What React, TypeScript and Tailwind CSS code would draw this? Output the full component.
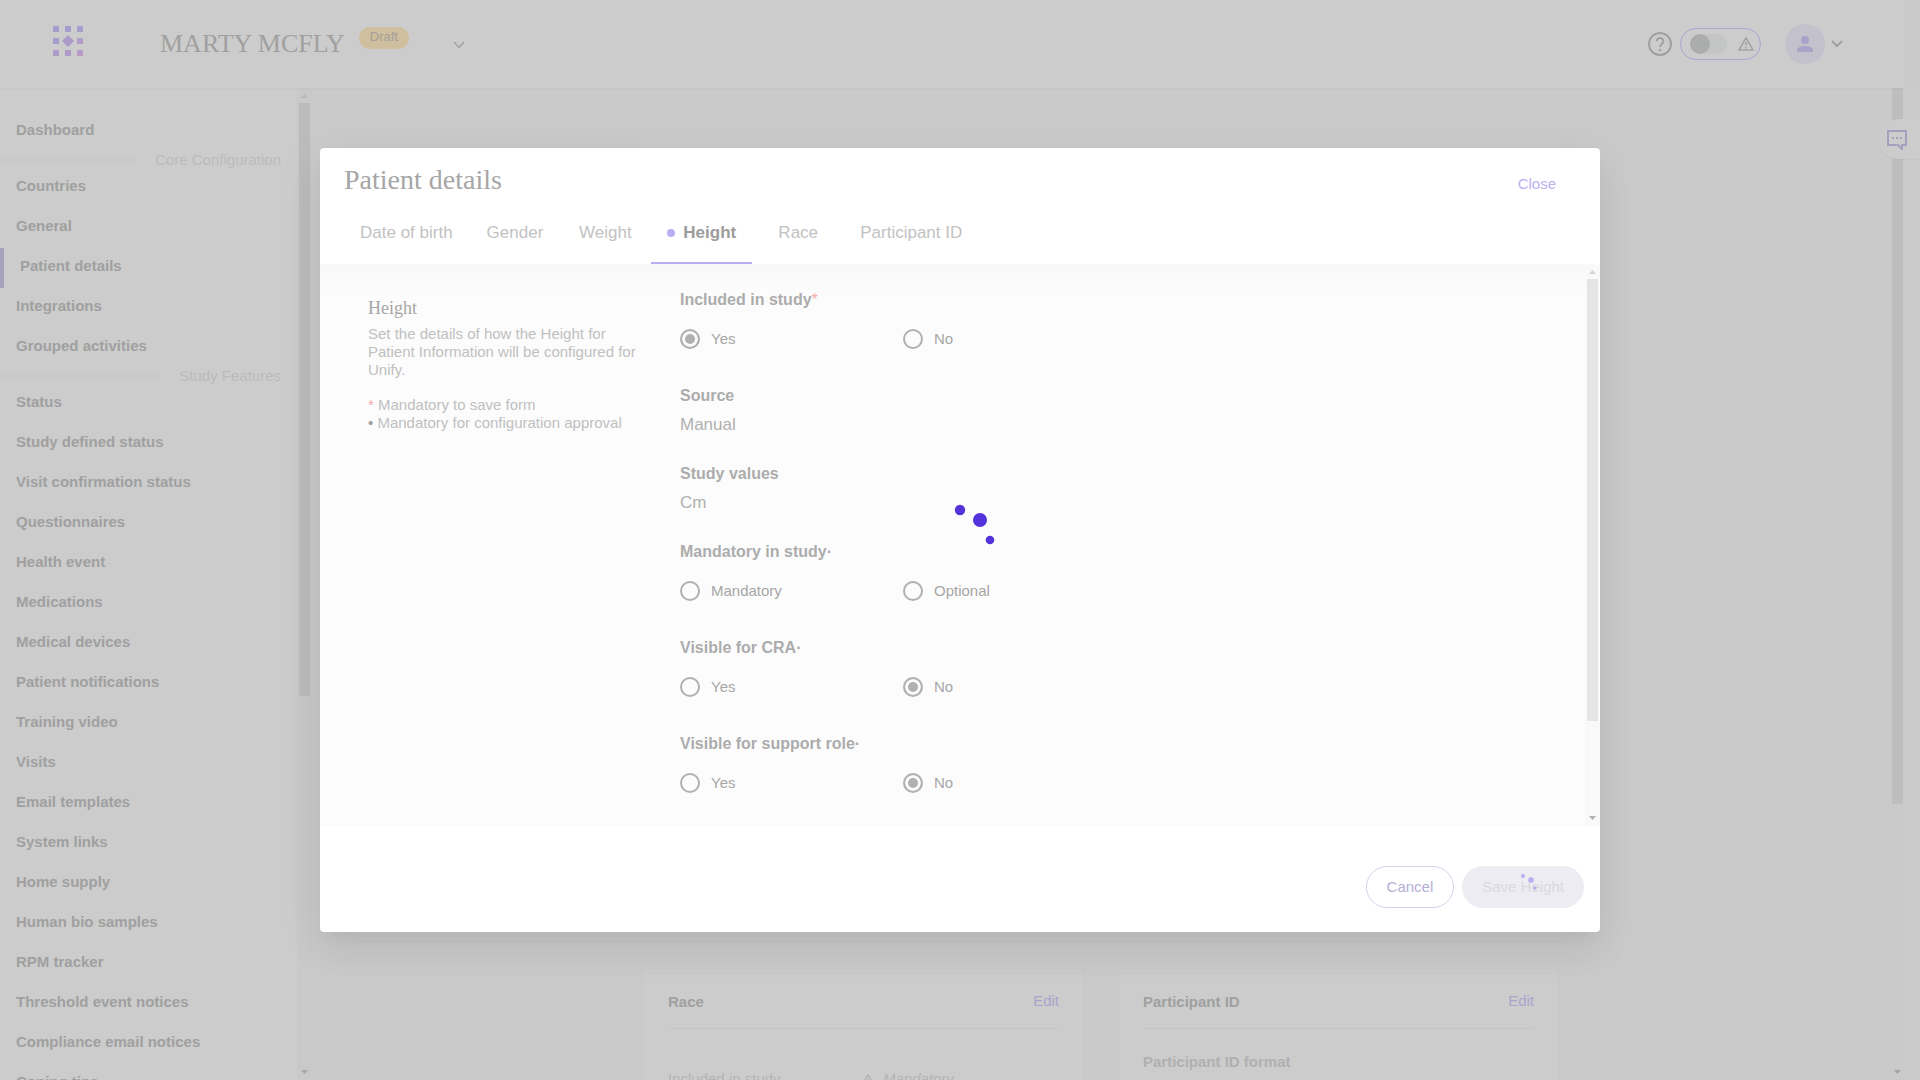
import React from "react";

const coreItems = ["Countries", "General", "Patient details", "Integrations", "Grouped activities"];
const featureItems = [
  "Status",
  "Study defined status",
  "Visit confirmation status",
  "Questionnaires",
  "Health event",
  "Medications",
  "Medical devices",
  "Patient notifications",
  "Training video",
  "Visits",
  "Email templates",
  "System links",
  "Home supply",
  "Human bio samples",
  "RPM tracker",
  "Threshold event notices",
  "Compliance email notices",
  "Coping tips",
];
const tabs = ["Date of birth", "Gender", "Weight", "Height", "Race", "Participant ID"];

function NavItem({ label }: { label: string }) {
  const active = label === "Patient details";
  return (
    <a
      href="#"
      aria-current={active ? "page" : undefined}
      className={
        active
          ? "flex h-10 items-center border-l-4 border-[#a6a1bd] pb-1 pl-4"
          : "flex h-10 items-center pb-1 pl-4"
      }
    >
      {label}
    </a>
  );
}

function NavDivider({ label }: { label: string }) {
  return (
    <div className="flex h-4 items-center gap-4 pr-4 font-normal text-[#bbbbbb]">
      <span className="h-0.5 flex-1 bg-[#c8c8c8]" />
      {label}
    </div>
  );
}

function Scrollbar({
  track,
  thumb,
  up,
  down,
  size,
}: {
  track: string;
  thumb: string;
  up: string;
  down: string;
  size: string;
}) {
  return (
    <div aria-hidden="true" className={`flex w-[15px] shrink-0 flex-col items-center ${track}`}>
      <svg width="15" height="15" viewBox="0 0 15 15" className={`shrink-0 ${up}`}>
        <path d="M4 10h7L7.500 6z" fill="currentColor" />
      </svg>
      <div className="w-full min-h-0 flex-1 px-0.5">
        <div className={`w-full ${thumb} ${size}`} />
      </div>
      <svg width="15" height="15" viewBox="0 0 15 15" className={`shrink-0 ${down}`}>
        <path d="M4 5h7L7.500 9z" fill="currentColor" />
      </svg>
    </div>
  );
}

function Logo() {
  const cells = [
    [0, 0, "#a79dcc"],
    [12, 0, "#a79dcc"],
    [24, 0, "#a99dcc"],
    [0, 12, "#a79dcc"],
    [24, 12, "#b09bc9"],
    [0, 24, "#ad9bca"],
    [12, 24, "#b09ac9"],
    [24, 24, "#b39ac8"],
  ] as const;
  return (
    <svg width="30" height="30" viewBox="0 0 30 30" role="img" aria-label="Home">
      {cells.map(([x, y, fill]) => (
        <rect key={`${x}-${y}`} x={x} y={y} width="6" height="6" fill={fill} />
      ))}
      <path d="M15 9l6 6-6 6-6-6z" fill="#ab9bca" />
    </svg>
  );
}

function Warning({ className }: { className: string }) {
  return (
    <svg width="18" height="16" viewBox="0 0 18 16" className={className} fill="none" stroke="currentColor">
      <path d="M9 1.800L16 14H2z" strokeWidth="1.600" strokeLinejoin="round" />
      <path d="M9 6v3.500M9 10.800v1.700" strokeWidth="1.600" />
    </svg>
  );
}

function Spinner({ className }: { className: string }) {
  return (
    <svg viewBox="0 0 80 80" className={className} fill="currentColor" aria-hidden="true">
      <circle cx="40" cy="10" r="5.200" />
      <circle cx="60" cy="20" r="7" />
      <circle cx="70" cy="40" r="4.300" />
    </svg>
  );
}

function Header() {
  return (
    <header className="z-10 mr-[15px] flex h-[88px] shrink-0 items-center bg-[#cccccc] pl-[53px] pr-[62px] shadow-[0_1px_3px_rgba(0,0,0,0.03)]">
      <a href="#" className="mb-1.5 flex">
        <Logo />
      </a>
      <h1 className="ml-[77px] font-['Liberation_Serif',serif] text-[26px] leading-8 text-[#a0a0a0]">
        MARTY MCFLY
      </h1>
      <span className="mb-3 ml-3.5 flex h-[22px] w-[50px] items-center justify-center rounded-full bg-[#cfbf9f] pb-0.5 text-[13px] text-[#a3a099]">
        Draft
      </span>
      <button aria-label="Switch study" className="ml-11 mt-0.5 text-[#a0a0a0]">
        <svg width="12" height="8" viewBox="0 0 12 8" fill="none" stroke="currentColor" strokeWidth="1.300">
          <path d="M1 1l5 5.500L11 1" />
        </svg>
      </button>
      <div className="ml-auto flex items-center">
        <button aria-label="Help" className="text-[#a0a0a0]">
          <svg width="24" height="24" viewBox="0 0 24 24" fill="none" stroke="currentColor">
            <circle cx="12" cy="12" r="11" strokeWidth="2" />
            <path d="M8.700 9.300a3.300 3.300 0 1 1 5.400 2.500c-1.300 1-2.100 1.600-2.100 3.200" strokeWidth="2" />
            <path d="M12 17v2" strokeWidth="2.200" />
          </svg>
        </button>
        <label className="ml-2 flex h-8 w-[81px] items-center justify-between rounded-full border border-[#aca4cf] pl-[9px] pr-[5px] text-[#a3a3a3]">
          <input
            type="checkbox"
            role="switch"
            aria-label="Show warnings"
            className="h-5 w-[37px] appearance-none rounded-full bg-[#c3c6c5] before:block before:size-5 before:rounded-full before:bg-[#abadac]"
          />
          <Warning className="" />
        </label>
        <button aria-label="Account" className="ml-6 flex items-center gap-1.5">
          <span className="flex size-10 items-center justify-center rounded-full bg-[#c3c1cb] text-[#aaa2c9]">
            <svg width="16" height="16" viewBox="0 0 16 16" fill="currentColor">
              <circle cx="8" cy="4" r="4" />
              <path d="M0 16v-2c0-2.700 5.300-4 8-4s8 1.300 8 4v2z" />
            </svg>
          </span>
          <svg width="12" height="8" viewBox="0 0 12 8" fill="none" stroke="#a0a0a0" strokeWidth="2">
            <path d="M1 1l5 5 5-5" />
          </svg>
        </button>
      </div>
    </header>
  );
}

function SummaryCard({ title, children }: { title: string; children: React.ReactNode }) {
  return (
    <section className="h-[300px] rounded border border-[#c8c8c8] bg-[#cccccc] px-6 pt-[23px]">
      <div className="flex h-[37px] justify-between border-b border-[#c5c5c5] leading-5">
        <h3 className="font-bold text-[#a0a0a0]">{title}</h3>
        <button className="self-start leading-[18px] text-[#aca3cc]">Edit</button>
      </div>
      {children}
    </section>
  );
}

function Choice({
  name,
  options,
  value,
  label,
  mark,
}: {
  name: string;
  options: string[];
  value?: string;
  label: string;
  mark: React.ReactNode;
}) {
  return (
    <fieldset className="pb-[27px]">
      <legend className="text-base leading-5 font-bold text-[#acacac]">
        {label}
        {mark}
      </legend>
      <div className="mt-[9px] flex">
        {options.map((option) => (
          <label key={option} className="flex h-10 w-[223px] items-center gap-[11px] text-[#a6a6a6]">
            <input
              type="radio"
              name={name}
              defaultChecked={option === value}
              className="size-5 appearance-none rounded-full border-2 border-[#b0b0b0] checked:bg-[#b0b0b0] checked:shadow-[inset_0_0_0_3px_#fcfcfc]"
            />
            {option}
          </label>
        ))}
      </div>
    </fieldset>
  );
}

function StaticField({ label, value }: { label: string; value: string }) {
  return (
    <dl className="pb-[29px] leading-5">
      <dt className="text-base leading-5 font-bold text-[#acacac]">{label}</dt>
      <dd className="mt-[9px] text-[17px] leading-5 text-[#b0b0b0]">{value}</dd>
    </dl>
  );
}

function PatientDialog() {
  return (
    <div
      role="dialog"
      aria-modal="true"
      aria-labelledby="dialog-title"
      className="relative flex w-2/3 flex-col overflow-hidden rounded bg-white shadow-[0_11px_15px_-7px_rgba(0,0,0,0.05),0_24px_38px_3px_rgba(0,0,0,0.04),0_9px_46px_8px_rgba(0,0,0,0.04)]"
    >
      <div className="flex h-[116px] flex-col justify-between">
        <div className="flex items-start justify-between pl-6 pr-11 pt-4">
          <h2
            id="dialog-title"
            className="font-['Liberation_Serif',serif] text-[28px] leading-8 text-[#a6a6a6]"
          >
            Patient details
          </h2>
          <button className="mt-2.5 leading-5 text-[#bbb0f0]">Close</button>
        </div>
        <div role="tablist" className="flex gap-0.5 pl-6">
          {tabs.map((tab) =>
            tab === "Height" ? (
              <button
                key={tab}
                role="tab"
                aria-selected="true"
                className="flex h-[60px] items-center justify-center gap-2 border-b-2 border-[#baadf2] px-4 text-[17px] font-bold text-[#9c9c9c]"
              >
                <span className="size-2 rounded-full bg-[#baadf2]" />
                {tab}
              </button>
            ) : (
              <button
                key={tab}
                role="tab"
                aria-selected="false"
                className="h-[60px] min-w-[88px] border-b-2 border-transparent px-4 text-[17px] text-[#c2c2c2]"
              >
                {tab}
              </button>
            ),
          )}
        </div>
      </div>

      <div className="flex h-[562px] bg-[#fcfcfc]">
        <div className="flex min-w-0 flex-1 overflow-hidden bg-linear-to-b from-[#f8f8f8] to-[#fcfcfc] to-[28px] pl-12 pt-[26px]">
          <aside className="w-[280px] shrink-0 pt-1.5 leading-[18px] text-[#c0c0c0]">
            <h3 className="mb-[5px] font-['Liberation_Serif',serif] text-lg leading-6 text-[#a6a6a6]">
              Height
            </h3>
            <p>Set the details of how the Height for Patient Information will be configured for Unify.</p>
            <p className="mt-[17px]">
              <span className="text-[#f5aaaa]">*</span> Mandatory to save form
            </p>
            <p>
              <span className="text-[#a0a0a0]">•</span> Mandatory for configuration approval
            </p>
          </aside>
          <form className="ml-8 flex-1">
            <Choice
              name="included"
              label="Included in study"
              options={["Yes", "No"]}
              value="Yes"
              mark={<span className="font-normal text-[#f5aaaa]">*</span>}
            />
            <StaticField label="Source" value="Manual" />
            <StaticField label="Study values" value="Cm" />
            <Choice name="mandatory" label="Mandatory in study" options={["Mandatory", "Optional"]} mark="·" />
            <Choice name="cra" label="Visible for CRA" options={["Yes", "No"]} value="No" mark="·" />
            <Choice name="support" label="Visible for support role" options={["Yes", "No"]} value="No" mark="·" />
          </form>
        </div>
        <Scrollbar
          track="bg-[#f9f9f9]"
          thumb="bg-[#e5e5e5]"
          up="text-[#d4d4d4]"
          down="text-[#b2b2b2]"
          size="h-[83%]"
        />
      </div>

      <div className="flex justify-end gap-2 pb-6 pr-4 pt-10">
        <button className="h-[42px] rounded-full border border-[#d6d2ea] px-5 text-[#b5afd6]">Cancel</button>
        <button disabled className="relative h-[42px] rounded-full bg-[#edecf2] px-5 text-[#dad9e0]">
          Save Height
          <span className="absolute inset-0 flex items-center justify-center pt-0.5">
            <Spinner className="size-8 text-[#baadf2]" />
          </span>
        </button>
      </div>

      <div className="pointer-events-none absolute inset-0 flex items-center justify-center">
        <Spinner className="size-20 text-[#5433dc]" />
      </div>
    </div>
  );
}

export default function App() {
  return (
    <div className="relative flex h-screen flex-col overflow-hidden bg-[#cacaca] font-['Liberation_Sans',Arial,sans-serif] text-[15px]">
      <Header />
      <div className="flex min-h-0 flex-1">
        <nav className="flex w-[312px] shrink-0 bg-[#cccccc] font-bold text-[#a0a0a0]">
          <div className="min-w-0 flex-1 overflow-hidden pt-6">
            <NavItem label="Dashboard" />
            <NavDivider label="Core Configuration" />
            {coreItems.map((item) => (
              <NavItem key={item} label={item} />
            ))}
            <NavDivider label="Study Features" />
            {featureItems.map((item) => (
              <NavItem key={item} label={item} />
            ))}
          </div>
          <Scrollbar
            track="bg-[#c9c9c9]"
            thumb="bg-[#bcbcbc]"
            up="text-[#b8b8b8]"
            down="text-[#a8a8a8]"
            size="h-[593px]"
          />
        </nav>
        <main className="min-w-0 flex-1 overflow-hidden pt-12">
          <div className="mx-auto flex w-full max-w-[916px] flex-col gap-[34px]">
            <div className="h-[798px] shrink-0 rounded bg-[#cbcbcb]" />
            <div className="grid grid-cols-2 gap-[34px]">
              <SummaryCard title="Race">
                <div className="mt-10 flex leading-5 text-[#b4b4b4]">
                  <span className="w-[191px]">Included in study</span>
                  <Warning className="mt-1" />
                  <em className="ml-1.5">Mandatory</em>
                </div>
              </SummaryCard>
              <SummaryCard title="Participant ID">
                <h4 className="mt-[23px] font-bold leading-5 text-[#b0b0b0]">Participant ID format</h4>
              </SummaryCard>
            </div>
          </div>
        </main>
        <Scrollbar
          track="bg-[#cacaca]"
          thumb="bg-[#bebebe]"
          up="hidden"
          down="text-[#a4a4a4]"
          size="h-[716px]"
        />
        <div className="w-[15px] shrink-0 bg-[#cbcbcb]" />
      </div>

      <button
        aria-label="Open chat"
        className="absolute right-0 top-[119px] z-10 flex h-10 w-[41px] items-center rounded-l-full bg-[#cccccc] pl-2 pt-0.5 text-[#a6a0bf] shadow-[0_1px_3px_rgba(0,0,0,0.03)]"
      >
        <svg width="20" height="20" viewBox="0 0 20 20" fill="none" stroke="currentColor" strokeWidth="2">
          <path d="M1 1h18v14h-4v4l-4-4H1z" />
          <path d="M5 8h2M9 8h2M13 8h2" />
        </svg>
      </button>

      <div className="absolute inset-0 z-20 flex items-center justify-center">
        <PatientDialog />
      </div>
    </div>
  );
}
